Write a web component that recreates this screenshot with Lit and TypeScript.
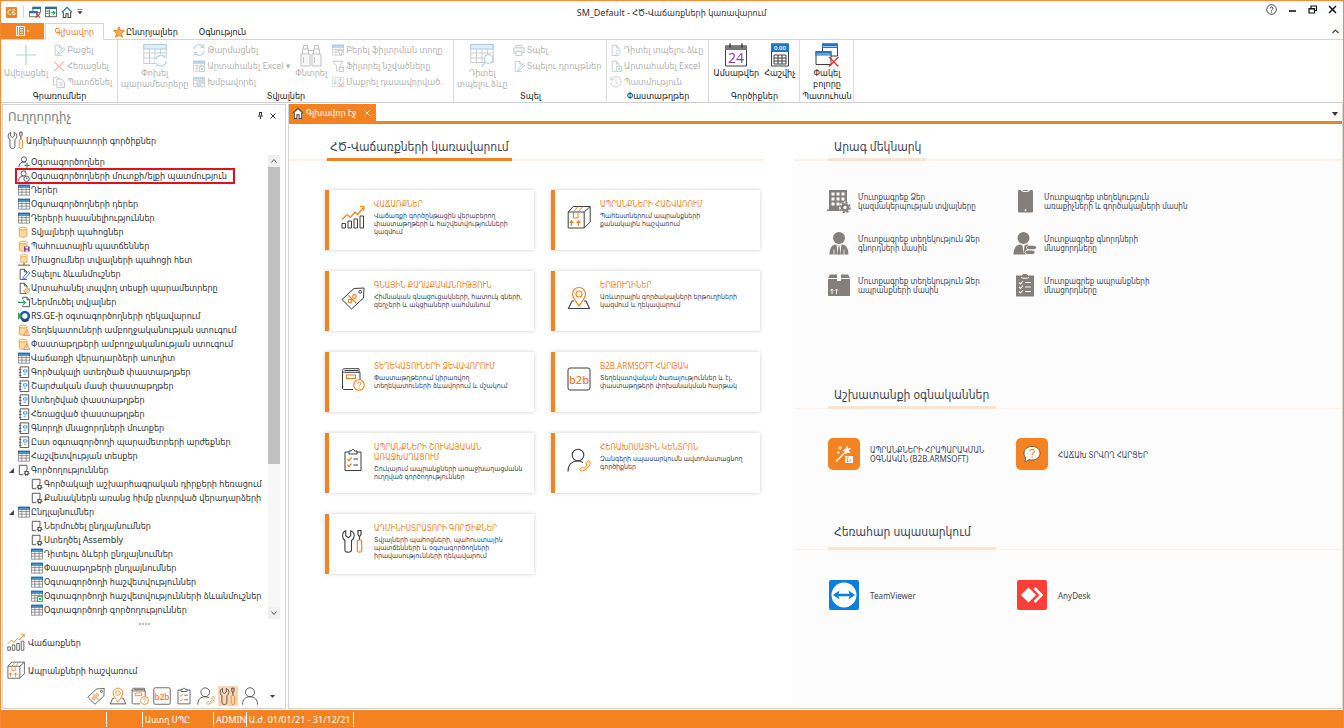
import { LitElement, html, css, svg, nothing } from "lit";
import { customElement } from "lit/decorators.js";
import { classMap } from "lit/directives/class-map.js";

const K = "#3f3f3f";
const O = "#f58220";
const B = "#1f6fb5";
const G = "#1fa055";

const gear = (x: number, y: number, r: number, c: string) => svg`
  <circle cx=${x} cy=${y} r=${r} fill="#fff" stroke=${c} stroke-width="1.3"/>
  <circle cx=${x} cy=${y} r=${r + 1} fill="none" stroke=${c} stroke-width="1" stroke-dasharray="1.2 1.4"/>`;
const page = (c = K) => svg`<path d="M10.5 13.5h-8v-12h5l3 3v3M7.5 1.5v3h3" fill="none" stroke=${c}/>`;
const grid = svg`<path d="M.5 1.5h13v11.5H.5zM.5 6.500h13M.5 9.500h13M4.500 4v9M9.500 4v9" fill="#fff" stroke="#777" stroke-width=".9"/><path d="M0 .8h14v3.800H0z" fill=${B}/><path d="M1 3.500h12" stroke="#8cc8f0" stroke-width=".9"/>`;
const db = svg`<path d="M1.5 3v8.5c0 2 9 2 9 0V3" fill="#fbd9a0" stroke="#ee9a34"/><ellipse cx="6" cy="3" rx="4.5" ry="1.7" fill="#fff0d8" stroke="#ee9a34"/>`;
const house = svg`<path d="M1 7.5 7 1.500l6 6" fill="none" stroke=${B} stroke-width="1.4"/><path d="M2.700 7v6.300h3V9h2.600v4.300h3V7" fill="none" stroke="#444" stroke-width="1.200"/>`;
const xls = svg`<path d="M7.500 7.500h6v6h-6z" fill="#e4f6ea" stroke=${G}/><path d="m9 9 3 3m0-3-3 3" stroke=${G}/>`;

/* 14 × 14 glyphs for the tree, the ribbon and the title bar */
const small: Record<string, unknown> = {
  grid,
  db,
  house,
  userAdd: svg`<circle cx="7" cy="4" r="3" fill="none" stroke=${K}/><path d="M1 13c0-4 2.500-6 6-6 1 0 1.500.2 2 .4" fill="none" stroke=${K}/><path d="M10.500 8v6M7.500 11h6" stroke=${G} stroke-width="1.300"/>`,
  userClock: svg`<circle cx="6.500" cy="4" r="3" fill="none" stroke=${K}/><path d="M.7 13c0-4 2.300-6 5.800-6" fill="none" stroke=${K}/><circle cx="10" cy="10.300" r="3.200" fill="#fff" stroke=${K}/><path d="M10 8.500v2h1.500" fill="none" stroke="#2b8fd8"/>`,
  dbSave: svg`${db}<path d="M7 7.500h6.500v6H7z" fill="#8e3a9d"/><path d="M8.700 8h3v2h-3zM9 11.500h2.500v2H9z" fill="#fff"/>`,
  dbNet: svg`<g transform="translate(2 -.5) scale(.82)">${db}</g><path d="M0 13h14M7 10.500V13" stroke=${K}/><path d="M5.500 12h3v2h-3z" fill=${O}/>`,
  dbWarn: svg`${db}<path d="m10.200 6.800 3.500 6.500H6.800z" fill="#fff" stroke="#ee7a34"/><path d="M10.200 9v2.300M10.200 12v.8" stroke="#ee7a34"/>`,
  pageEdit: svg`${page()}<path d="m5.500 13 1-3 5.500-6 2 1.800L8.500 12z" fill="#dcefff" stroke=${B} stroke-width=".9"/>`,
  pageOut: svg`${page()}<path d="M7 13.500 13 7.500M6.500 10l4-2 3 .3-.5 3-3 2z" fill="#fff" stroke=${O}/>`,
  pageIn: svg`<path d="M5.500 4v-2.500h5l3 3v8h-8V11M10.500 1.500v3h3" fill="none" stroke=${K}/><path d="M0 7.500h8M6 5l2.700 2.500L6 10" fill="none" stroke=${G} stroke-width="1.300"/>`,
  globe: svg`<circle cx="8" cy="7" r="4.600" fill="none" stroke="#1c5f9f" stroke-width="3"/><path d="M5 11.500c2 1.800 5 1.500 7-.5" fill="none" stroke="#1c3f7f" stroke-width="2.500"/><path d="M0 2.500 5 7l-5 4.500z" fill="#3aa14a"/>`,
  form: svg`<path d="M2.500 1h10v12.500h-10z" fill="#fff" stroke=${K}/><path d="M1 4h3M1 7.500h3M1 11h3" stroke=${K} stroke-width=".8"/><path d="M6.500 4.500h4v2.500h-4zM6.500 9.500h3" fill="none" stroke="#2b8fd8"/>`,
  pageGear: svg`<path d="M6 12.500H1.500v-11h9V7" fill="none" stroke=${K}/>${gear(10, 10.500, 2, K)}`,
  gridXls: svg`${grid}${xls}`,
  open: svg`${page("#666")}<path d="m5.500 12.500 1-3 5.500-5 2 1.800-5.500 5z" fill="#dcefff" stroke=${B}/>`,
  del: svg`<path d="m1 2 12 11M13 2 1 13" stroke="#e0302a" stroke-width="1.300"/>`,
  copy: svg`<path d="M3 10.500H.5v-9h4l3 2" fill="none" stroke="#555"/><path d="M4.500 3.500h5l4 3.500v6.500h-9z" fill="#fff" stroke="#555"/><path d="M6.500 8h5M6.500 10.500h5" stroke=${B}/>`,
  refresh: svg`<path d="M1 6a6 6 0 0 1 11-2.500V1M12.500 4H9M13 8a6 6 0 0 1-11 2.500V13M1.500 10H5" fill="none" stroke="#2b8fd8" stroke-width="1.300"/>`,
  group: svg`<path d="M.5 1.500h13v11H.5zM.5 5h13M.5 9h13M5 5v7.500" fill="#fff" stroke="#666"/><path d="M1 2h12v2H1zM6 6h7v2H6zM6 10h4v2H6z" fill="#2b8fd8"/>`,
  filterRow: svg`${grid}<path d="M6.500 7.500h7L11 10.500v3l-2-1v-2z" fill="#fff" stroke="#555"/>`,
  filterMark: svg`<path d="M7 12 5.500 13V7L1 1.500h12L9 6" fill="none" stroke="#555"/><path d="M8.500 8.500h5v5h-5zM9 8l3-2" fill="#fff" stroke="#555"/>`,
  clearSort: svg`<path d="M.5 1.500h13v11H.5zM7 2v10" fill="#fff" stroke="#999"/><path d="M3.500 3v6M2 7.500 3.500 9.500 5 7.500M10 7V3.500M8.500 5 10 3l1.500 2" fill="none" stroke=${B}/><path d="m8 8 5 5m0-5-5 5" stroke="#e0302a" stroke-width="1.300"/>`,
  print: svg`<path d="M3.500 4V1.500h7V4M1 4.500h12v6H1z" fill="#d8ebfb" stroke="#555"/><path d="M3.500 8.500h7v5h-7z" fill="#fff" stroke="#555"/>`,
  pageFind: svg`${page("#666")}<circle cx="9.500" cy="9.500" r="2.500" fill="#fff" stroke="#2b8fd8"/><path d="m7.500 11.500-2 2" stroke="#2b8fd8"/>`,
  pageXls: svg`${page("#666")}${xls}`,
  history: svg`<path d="M2 3.500a6 6 0 1 1-1 4M1 1v3.500h3.500" fill="none" stroke="#666"/><path d="M7 4v3.500l2.500 1.500" fill="none" stroke="#2b8fd8"/>`,
  windows: svg`<path d="M4.500 1.500h9v6h-9z" fill="#fff" stroke="#555"/><path d="M4 1h10v2.500H4z" fill=${B}/><path d="M.5 6.500h9v6h-9z" fill="#fff" stroke="#555"/><path d="M0 6h10v2.500H0z" fill=${B}/><path d="m8 8.500 5 5m0-5-5 5" stroke="#e0302a" stroke-width="1.300"/>`,
  panelGo: svg`<path d="M.5 1.500h13v11H.5zM5 4v8.500" fill="#fff" stroke="#444"/><path d="M0 1h14v2.500H0z" fill=${B}/><path d="M1.500 6H4M1.500 8.500H4" stroke="#444"/><path d="M6.500 8h5M9.500 6l2.200 2-2.200 2" fill="none" stroke=${G} stroke-width="1.200"/>`,
  star: svg`<path d="m7 .8 1.900 4.200 4.600.5-3.400 3.100.9 4.600L7 10.900l-4 2.300.9-4.600L.5 5.500l4.600-.5z" fill="#fba94a" stroke="#e07a1c" stroke-width=".9"/>`,
};

/* 24 × 24 glyphs */
const large: Record<string, unknown> = {
  sales: svg`<path d="M1 23v-4.500h3.500V23zM7 23v-7h3.500v7zM13 23v-9h3.500v9zM19 23V11h3.500v12z" fill="none" stroke=${K}/><path d="m1 14.500 5-5 3.500 3L14 7l2.500 2.500L23 2M19 1.500l4 .2-.3 4" fill="none" stroke=${O} stroke-width="1.200"/>`,
  box: svg`<path d="M1.200 7h16v16h-16zM1.200 7l5-5.500h17L17.200 7M23.200 1.500V17l-6 6" fill="none" stroke=${K}/><path d="M11 1.500 6.500 7v6h4.500V7l5-5.500" fill="none" stroke=${O}/><path d="M4.500 21v-5M2.700 18 4.500 15.800 6.300 18M11.500 21v-5M9.700 18l1.800-2.200 1.800 2.200" fill="none" stroke=${O} stroke-width="1.300"/>`,
  price: svg`<path d="M13 2.500 23 2l-.5 10-12 11-9.500-9.500z" fill="none" stroke=${K}/><circle cx="19.200" cy="5.800" r="1.400" fill="none" stroke=${K}/><path d="m7.500 9.500 8 8" stroke=${O} stroke-width="1.200"/><circle cx="9" cy="15" r="1.800" fill="none" stroke=${O} stroke-width="1.200"/><circle cx="13.500" cy="10.500" r="1.800" fill="none" stroke=${O} stroke-width="1.200"/>`,
  route: svg`<path d="M7 15H5L1.500 22.500h21L19 15h-2" fill="none" stroke=${K} stroke-width="1.100"/><path d="M12 20c-3-4.500-6.500-8-6.500-12a6.500 6.500 0 0 1 13 0c0 4-3.500 7.500-6.500 12z" fill="none" stroke=${O} stroke-width="1.200"/><circle cx="12" cy="8" r="3" fill="none" stroke=${O} stroke-width="1.100"/>`,
  book: svg`<path d="M12 22.500H3c-1 0-1.500-.8-1.500-1.500V3.500c0-1 .8-1.800 2-1.800H18v3.500M1.500 4c0 .8.800 1.300 1.800 1.300H19V13M3.500 3.500H17" fill="none" stroke=${K}/><path d="M5.500 8h9v3.500h-9z" fill="none" stroke=${O} stroke-width="1.100"/><circle cx="18" cy="18" r="5.300" fill="#fff" stroke=${O} stroke-width="1.100"/><path d="M16.300 16.800c0-2.400 3.600-2.200 3.400 0-.1 1.200-1.700 1.200-1.700 2.700M18 20.500v1" fill="none" stroke=${O}/>`,
  b2b: svg`<rect x="1" y="1" width="22" height="22" rx="2" fill="none" stroke=${K}/><text x="12" y="17" text-anchor="middle" font-family="Open Sans, sans-serif" font-weight="600" font-size="11" fill=${O}>b2b</text>`,
  clipboard: svg`<path d="M8 4H4v18.500h16V4h-4M8 3h2.500c0-2 3-2 3 0H16v3H8z" fill="none" stroke=${K}/><path d="M12.500 11H17M12.500 17H17" stroke=${K}/><path d="m6.500 11 1.500 1.500 2.500-3M6.500 17 8 18.500l2.500-3" fill="none" stroke=${O} stroke-width="1.200"/>`,
  call: svg`<circle cx="11" cy="7" r="5.800" fill="none" stroke=${K} stroke-width="1.100"/><path d="M1 23.500C1 17 4.500 13 11 13c2 0 3.500.5 5 1.500" fill="none" stroke=${K} stroke-width="1.100"/><path d="M21.500 12.500c1.500.5 2 2 1.200 4-1.200 3.300-4 5.800-7.200 6.300-1.500.2-2.500-.4-3-1.800l3-1.800 1.500 1c1.500-.7 2.500-1.800 3-3.200l-1-1.500z" fill="none" stroke=${O}/>`,
  tools: svg`<path d="M2.500 1.800v5l2.500 2 2.500-2v-5c2 .8 3.500 2.700 3.500 5 0 2-1 3.600-2.700 4.700V21c0 3-6.600 3-6.600 0v-9.500C0 10.400-.6 8.800-.6 6.800c0-2.300 1-4.200 3.100-5z" transform="translate(2.200 0)" fill="none" stroke=${K} stroke-width="1.100"/><path d="M17 1.500h3v4l-1 1.500h-1l-1-1.500zM18.500 7v4" fill="none" stroke=${K} stroke-width="1.200"/><path d="M16.300 12.500c0-2 4.400-2 4.400 0V22c0 1.500-4.400 1.500-4.400 0z" fill="none" stroke=${O} stroke-width="1.200"/>`,
  person: svg`<circle cx="12" cy="7" r="6" fill="none" stroke=${K} stroke-width="1.100"/><path d="M2 23.500C2 17 5.500 13 12 13s10 4 10 10.500" fill="none" stroke=${K} stroke-width="1.100"/>`,
  plus: svg`<path d="M12 2v20M2 12h20" stroke=${G} stroke-width="1.200"/>`,
  params: svg`<path d="M.8 1.500h22.400v19H.8zM.8 10h22.400M.8 15h22.400M6.500 6v14.500M12 6v14.500M17.500 6v14.500" fill="#fff" stroke="#777"/><path d="M.8 1.500h22.400V6H.8z" fill="#a8d3f2" stroke=${B}/><circle cx="18" cy="17.500" r="6" fill="#fff"/><path d="M13 16.500a5 5 0 0 1 9-2v-2M23 18.500a5 5 0 0 1-9 2.500v2.500" fill="none" stroke="#2b8fd8" stroke-width="1.200"/>`,
  find: svg`<path d="M2 11h9v12H2zM13 11h9v12h-9zM3.500 11V6h6v5M14.500 11V6h6v5M4.500 6V2.500h4V6M15.500 6V2.500h4V6M9.500 7.500h5" fill="#eee" stroke="#555"/><path d="M4.500 14v6M15.500 14v6" stroke="#555"/>`,
  preview: svg`<path d="M.8 1.500h22.400v18H.8zM.8 10h22.400M.8 15h22.400M6.500 6v13.500M12 6v13.500M17.500 6v13.500" fill="#fff" stroke="#777"/><path d="M.8 1.500h22.400V6H.8z" fill="#a8d3f2" stroke=${B}/><circle cx="18.500" cy="16" r="4.300" fill="#fff" stroke="#2b8fd8" stroke-width="1.200"/><path d="m15.500 19.500-4 4" stroke="#2b8fd8" stroke-width="1.300"/>`,
  calendar: svg`<path d="M1.500 3h21v20h-21z" fill="#fff" stroke=${K}/><path d="M1 2.500h22V7H1z" fill="#777"/><path d="M6 .5v4M18 .5v4" stroke=${K} stroke-width="1.500"/><text x="12" y="20" text-anchor="middle" font-family="Open Sans, sans-serif" font-size="14" fill="#8e3a9d">24</text>`,
  calc: svg`<path d="M3.500 1h17v22h-17z" fill="#fff" stroke=${K}/><path d="M3 .5h18V9H3z" fill="#2377bd"/><text x="12" y="7" text-anchor="middle" font-family="Open Sans, sans-serif" font-weight="600" font-size="6" fill="#fff">0.00</text><path d="M6 12h12v9H6zM6 15h12M6 18h12M10 12v9M14 12v9" fill="none" stroke=${K}/>`,
  closeAll: svg`<path d="M7.500 1h15v12h-15z" fill="#fff" stroke=${K}/><path d="M7 .5h16V5H7z" fill="#2377bd"/><path d="M8 3.500h14" stroke="#9fd0f3"/><path d="M1 8.500h15v13H1z" fill="#fff" stroke=${K}/><path d="M.5 8h16v4.500H.5z" fill="#2377bd"/><path d="M1.500 11h14" stroke="#9fd0f3"/><path d="m14 14 9.500 9.500m0-9.500L14 23.500" stroke="#e0302a" stroke-width="1.200"/>`,
};

/* 24 × 24 solid grey glyphs of the quick start list */
const D = "#857f7c";
const solid: Record<string, unknown> = {
  company: svg`<path d="M2 1h18v13h-5v8H0v-1.500h2z" fill=${D}/><path d="M4.500 3.500h3v3h-3zM9.500 3.500h3v3h-3zM14.500 3.500h3v3h-3zM4.500 8.500h3v3h-3zM9.500 8.500h3v3h-3zM14.500 8.500h3v3h-3zM4.500 13.500h3v3h-3zM9.500 13.500h3v3h-3z" fill="#fff"/><circle cx="18" cy="18.500" r="6" fill="#fcfcfc"/><circle cx="18" cy="18.500" r="3" fill="none" stroke=${D} stroke-width="2.600"/><circle cx="18" cy="18.500" r="5" fill="none" stroke=${D} stroke-width="1.600" stroke-dasharray="2.200 1.700"/>`,
  client: svg`<circle cx="12" cy="7" r="6" fill=${D}/><path d="M2.500 23.500c0-6 2.500-10 6.500-10l3 1.500 3-1.500c4 0 6.500 4 6.500 10z" fill=${D}/><path d="M7 18.500v5M17 18.500v5" stroke="#fcfcfc" stroke-width=".8"/><path d="m9.500 13.500 2.500 2 2.500-2-1.200 10h-2.600z" fill="#fcfcfc"/><path d="m11.300 15.500h1.400l.6 8h-2.600z" fill=${D}/>`,
  goods: svg`<path d="m3 1.500h7V8h4V1.500h7L23 5v18H1V5z" fill=${D}/><path d="M1 5.500h9M14 5.500h9M5 21v-5M3.500 17.500 5 16l1.500 1.500M9.500 21v-5M8 17.500 9.500 16l1.500 1.500" fill="none" stroke="#fcfcfc"/>`,
  phone: svg`<rect x="5" y="1" width="15" height="22.500" rx="1" fill=${D}/><path d="M8.500 1c.3 2 7.700 2 8 0" fill="none" stroke="#fcfcfc" stroke-width="1.200"/><circle cx="12.500" cy="21.300" r="1" fill="#fcfcfc"/>`,
  balance: svg`<circle cx="10.500" cy="7" r="6" fill=${D}/><path d="M.5 23.500c0-6 3-10 7-10l3 1.500 3-1.500c2 0 3.500.6 4.500 2l-5 4v4z" fill=${D}/><path d="m9.500 14 1 9 1-9z" fill="#fcfcfc"/><ellipse cx="18.500" cy="16.500" rx="5" ry="2.300" fill=${D} stroke="#fcfcfc" stroke-width=".8"/><ellipse cx="17" cy="21.300" rx="5" ry="2.300" fill=${D} stroke="#fcfcfc" stroke-width=".8"/>`,
  stock: svg`<path d="M3 2.500h6c0-2 6-2 6 0h6v21H3z" fill=${D}/><path d="M8 4.500c1 1 7 1 8 0" stroke="#fcfcfc" fill="none"/><path d="M12 9.500h6M12 14h6M12 18.500h6M6 9.500 7.500 11 10 8M6 14l1.500 1.500 2.500-3M6 18.500 7.500 20l2.500-3" fill="none" stroke="#fcfcfc" stroke-width="1.100"/>`,
};

/* 32 × 32 tiles */
const tile: Record<string, unknown> = {
  wizard: svg`<rect width="32" height="32" rx="5" fill=${O}/><path d="m8 23.500 9-9" stroke="#fff" stroke-width="1.200"/><path d="m19 7.500 1 2.800 3-.2-2 2.400 1.500 2.700-3-.8-2 2.200-.3-2.900-2.800-1.200 2.700-1.300z" fill="#fff"/><path d="M12 8v4M10 10h4M9 14.500h2.500M10.200 13.300v2.500" stroke="#fff" stroke-width=".9"/><path d="M17 18h8v7h-8z" fill="#fff"/><path d="M17 20h3v-2M19.500 24v-3M22 24v-3" fill="none" stroke=${O} stroke-width=".8"/>`,
  faq: svg`<rect width="32" height="32" rx="5" fill=${O}/><path d="M16 8.500c5 0 8 3 8 6.700s-3 6.800-8 6.800c-1 0-2-.1-3-.4-1.500 1.400-2.800 1.700-4.500 1.700 1-1 1.300-2 1.300-3.300-1.200-1.300-1.800-2.900-1.800-4.800 0-3.700 3-6.700 8-6.700z" fill="#fff" stroke="#555" stroke-width=".9"/><path d="M14 13.500c0-3 4.500-2.700 4.300 0-.2 1.700-2.200 1.600-2.200 3.800M16.100 18.500v1.200" fill="none" stroke=${O} stroke-width="1.100"/>`,
  team: svg`<rect x="1" y="1" width="30" height="30" rx="2" fill="#0b7fe0"/><circle cx="16" cy="16" r="12.500" fill="#fff"/><path d="m5 16 6.500-4.500-1 3.300h11l-1-3.300L27 16l-6.500 4.500 1-3.300h-11l1 3.300z" fill="#0b7fe0"/>`,
  any: svg`<rect x="1" y="1" width="30" height="30" rx="2" fill="#fb3f36"/><path d="m5 16 7.500-7.500L20 16l-7.500 7.500z" fill="#fff"/><path d="m18.500 9 7 7-7 7" fill="none" stroke="#fff" stroke-width="2.600"/>`,
};

const icon = (set: Record<string, unknown>, name: string, box: number, cls: string) =>
  html`<svg class=${cls} viewBox="0 0 ${box} ${box}" aria-hidden="true">${set[name]}</svg>`;

type Node = { icon: string; text: string; level?: number; open?: boolean; marked?: boolean };
const tree: Node[] = [
  { icon: "userAdd", text: "Օգտագործողներ" },
  { icon: "userClock", text: "Օգտագործողների մուտքի/ելքի պատմություն", marked: true },
  { icon: "grid", text: "Դերեր" },
  { icon: "grid", text: "Օգտագործողների դերեր" },
  { icon: "grid", text: "Դերերի հասանելիություններ" },
  { icon: "db", text: "Տվյալների պահոցներ" },
  { icon: "dbSave", text: "Պահուստային պատճեններ" },
  { icon: "dbNet", text: "Միացումներ տվյալների պահոցի հետ" },
  { icon: "pageEdit", text: "Տպելու ձևանմուշներ" },
  { icon: "pageOut", text: "Արտահանել տպվող տեսքի պարամետրերը" },
  { icon: "pageIn", text: "Ներմուծել տվյալներ" },
  { icon: "globe", text: "RS.GE-ի օգտագործողների ղեկավարում" },
  { icon: "dbWarn", text: "Տեղեկատուների ամբողջականության ստուգում" },
  { icon: "dbWarn", text: "Փաստաթղթերի ամբողջականության ստուգում" },
  { icon: "grid", text: "Վաճառքի վերադարձերի աուդիտ" },
  { icon: "form", text: "Գործակալի ստեղծած փաստաթղթեր" },
  { icon: "form", text: "Շարժական մասի փաստաթղթեր" },
  { icon: "form", text: "Ստեղծված փաստաթղթեր" },
  { icon: "form", text: "Հեռացված փաստաթղթեր" },
  { icon: "form", text: "Գնորդի մնացորդների մուտքեր" },
  { icon: "form", text: "Ըստ օգտագործողի պարամետրերի արժեքներ" },
  { icon: "grid", text: "Հաշվետվության տեսքեր" },
  { icon: "pageGear", text: "Գործողություններ", open: true },
  { icon: "pageGear", text: "Գործակալի աշխարհագրական դիրքերի հեռացում", level: 1 },
  { icon: "pageGear", text: "Քանակներն առանց հիմք ընտրված վերադարձերի", level: 1 },
  { icon: "grid", text: "Ընդլայնումներ", open: true },
  { icon: "pageGear", text: "Ներմուծել ընդլայնումներ", level: 1 },
  { icon: "pageGear", text: "Ստեղծել Assembly", level: 1 },
  { icon: "grid", text: "Դիտելու ձևերի ընդլայնումներ", level: 1 },
  { icon: "grid", text: "Փաստաթղթերի ընդլայնումներ", level: 1 },
  { icon: "grid", text: "Օգտագործողի հաշվետվություններ", level: 1 },
  { icon: "gridXls", text: "Օգտագործողի հաշվետվությունների ձևանմուշներ", level: 1 },
  { icon: "grid", text: "Օգտագործողի գործողություններ", level: 1 },
];

const cards = [
  { icon: "sales", title: "ՎԱՃԱՌՔՆԵՐ", lines: ["Վաճառքի գործընթացին վերաբերող", "փաստաթղթերի և հաշվետվությունների", "կազմում"] },
  { icon: "box", title: "ԱՊՐԱՆՔՆԵՐԻ ՀԱՇՎԱՌՈՒՄ", lines: ["Պահեստներում ապրանքների", "քանակային հաշվառում"] },
  { icon: "price", title: "ԳՆԱՅԻՆ ՔԱՂԱՔԱԿԱՆՈՒԹՅՈՒՆ", lines: ["Հիմնական գնացուցակների, հատուկ գների,", "զեղչերի և ակցիաների սահմանում"] },
  { icon: "route", title: "ԵՐԹՈՒՂԻՆԵՐ", lines: ["Առևտրային գործակալների երթուղիների", "կազմում և ղեկավարում"] },
  { icon: "book", title: "ՏԵՂԵԿԱՏՈՒՆԵՐԻ ՁԵՎԱՎՈՐՈՒՄ", lines: ["Փաստաթղթերում կիրառվող", "տեղեկատուների ձևավորում և մշակում"] },
  { icon: "b2b", title: "B2B.ARMSOFT ՀԱՐԹԱԿ", lines: ["Տեղեկատվական ծառայություններ և էլ.", "փաստաթղթերի փոխանակման հարթակ"] },
  { icon: "clipboard", title: "ԱՊՐԱՆՔՆԵՐԻ ՇՈՒԿԱՅԱԿԱՆ ԱՌԱՋԽԱՂԱՑՈՒՄ", lines: ["Շուկայում ապրանքների առաջխաղացմանն", "ուղղված գործողություններ"] },
  { icon: "call", title: "ՀԵՌԱԽՈՍԱՅԻՆ ԿԵՆՏՐՈՆ", lines: ["Զանգերի սպասարկումն ավտոմատացնող", "գործիքներ"] },
  { icon: "tools", title: "ԱԴՄԻՆԻՍՏՐԱՏՈՐԻ ԳՈՐԾԻՔՆԵՐ", lines: ["Տվյալների պահոցների, պահուստային", "պատճենների և օգտագործողների", "իրավասությունների ղեկավարում"] },
];

const quick = [
  { icon: "company", lines: ["Մուտքագրեք Ձեր", "կազմակերպության տվյալները"] },
  { icon: "phone", lines: ["Մուտքագրեք տեղեկություն", "առաքիչների և գործակալների մասին"] },
  { icon: "client", lines: ["Մուտքագրեք տեղեկություն Ձեր", "գնորդների մասին"] },
  { icon: "balance", lines: ["Մուտքագրեք գնորդների", "մնացորդները"] },
  { icon: "goods", lines: ["Մուտքագրեք տեղեկություն Ձեր", "ապրանքների մասին"] },
  { icon: "stock", lines: ["Մուտքագրեք ապրանքների", "մնացորդները"] },
];

const modules: [string, string][] = [
  ["price", "Գնային քաղաքականություն"],
  ["route", "Երթուղիներ"],
  ["book", "Տեղեկատուների ձևավորում"],
  ["b2b", "B2B.ArmSoft հարթակ"],
  ["clipboard", "Ապրանքների շուկայական առաջխաղացում"],
  ["call", "Հեռախոսային կենտրոն"],
  ["tools", "Ադմինիստրատորի գործիքներ"],
  ["person", "Օգտագործող"],
];

const base = css`
  * { box-sizing: border-box; }
  button, a {
    font: inherit; color: inherit; background: none; border: 0; padding: 0; margin: 0;
    text-align: left; text-decoration: none; white-space: nowrap; cursor: pointer;
  }
  svg { display: block; flex: none; }
  h1, h2, h3, p, ul { margin: 0; padding: 0; font-weight: 400; font-size: inherit; }
  ul { list-style: none; }
  .i12 { width: 12px; height: 12px; }
  .i18 { width: 18px; height: 18px; }
  .i24 { width: 24px; height: 24px; }
  .i32 { width: 32px; height: 32px; }
`;

@customElement("app-ribbon")
class AppRibbon extends LitElement {
  static styles = [base, css`
    :host { display: block; }
    .bar { display: flex; align-items: center; height: 22px; padding: 0 6px 0 5px; }
    .logo { width: 11px; height: 11px; }
    .quick { display: flex; align-items: center; gap: 4px; margin-left: 6px; padding-left: 5px; border-left: 1px solid #d5d5d5; }
    .side { flex: 1; display: flex; align-items: center; }
    .right { justify-content: flex-end; gap: 11px; align-self: flex-start; height: 16px; }
    .bar .name { color: #333; font-size: 9px; }
    .tabs { display: flex; height: 17px; align-items: stretch; border-bottom: 1px solid #d5d5d5; font-size: 9px; }
    .tab { display: flex; align-items: center; gap: 1px; padding: 0 9px; margin-bottom: -1px; color: #222; }
    .tab.on { justify-content: center; width: 59px; padding: 0; color: #f57c1a; border: 1px solid #d5d5d5; border-bottom-color: #fff; background: #fff; margin-left: 1px; }
    .tab.help { padding-left: 12px; }
    .file { width: 43px; display: flex; align-items: center; justify-content: center; background: #f58220; color: #fff; }
    .fill { flex: 1; }
    .fold { padding-right: 4px; display: flex; align-items: center; }
    .groups { display: flex; height: 63px; border-bottom: 1px solid #d0d0d0; font-size: 9px; color: #222; }
    .group { display: flex; flex-direction: column; border-right: 1px solid #dcdcdc; padding: 2px 2px 0 3px; }
    .g1 { width: 117px; } .g2 { width: 336px; } .g3 { width: 153px; }
    .g4 { width: 102px; } .g5 { width: 91px; } .g6 { width: 54px; }
    .items { display: flex; gap: 5px; flex: 1; }
    .g5 .items, .g6 .items { justify-content: center; }
    .caption { text-align: center; line-height: 13px; white-space: nowrap; }
    .g6 .caption { margin: 0 -2px; }
    .big { display: flex; flex-direction: column; align-items: center; align-self: flex-start; line-height: 11px; text-align: center; padding-top: 1px; }
    .big span { display: block; height: 11px; }
    .col { display: flex; flex-direction: column; gap: 4px; padding-top: 2px; }
    .line { display: flex; align-items: center; gap: 2px; height: 12px; line-height: 12px; }
    .off { opacity: .36; }
  `];

  big(ic: string, lines: string[], off = true) {
    return html`<button class=${classMap({ big: true, off })} ?disabled=${off}>
      ${icon(large, ic, 24, "i24")}${lines.map((l) => html`<span>${l}</span>`)}
    </button>`;
  }
  col(items: [string, string][]) {
    return html`<div class="col">${items.map(([ic, t]) => html`
      <button class="line off" disabled>${icon(small, ic, 14, "i12")}${t}</button>`)}</div>`;
  }

  render() {
    return html`
      <header class="bar">
        <div class="side">
          <svg class="logo" viewBox="0 0 11 11" aria-hidden="true"><rect width="11" height="11" rx="1" fill="#f58220"/><path d="M5 3H3.500c-2 0-2 4.500 0 4.500H5M6 3c0-1 3-1 3 0S6 4.500 6 6s3 2.500 3 1-1.500-2-3-3" fill="none" stroke="#fff"/></svg>
          <div class="quick">
            <button aria-label="Փակել բոլորը">${icon(small, "windows", 14, "i12")}</button>
            <button aria-label="Ուղղորդիչ">${icon(small, "panelGo", 14, "i12")}</button>
            <button aria-label="Գլխավոր էջ">${icon(small, "house", 14, "i12")}</button>
            <svg width="6" height="6" viewBox="0 0 6 6"><path d="M.5.500h5M1 2.500h4l-2 2.500z" fill="#444" stroke="#444" stroke-width=".6"/></svg>
          </div>
        </div>
        <h1 class="name">SM_Default - ՀԾ-Վաճառքների կառավարում</h1>
        <div class="side right">
          <svg width="11" height="11" viewBox="0 0 11 11"><circle cx="5.500" cy="5.500" r="4.800" fill="none" stroke="#333" stroke-width=".9"/><path d="M4 4.400c0-2 3-1.800 3 0 0 1-1.500 1-1.500 2.200M5.500 7.600v1" fill="none" stroke="#333"/></svg>
          <svg width="9" height="9" viewBox="0 0 9 9"><path d="M1 6h7" stroke="#111" stroke-width="1.600"/></svg>
          <svg width="9" height="9" viewBox="0 0 9 9"><path d="M3 3V1h5.500v4.500H7M1 3.500h5.500V8H1zM1 4h5.500" fill="none" stroke="#111" stroke-width="1.200"/></svg>
          <svg width="9" height="9" viewBox="0 0 9 9"><path d="m1 1 7 7m0-7L1 8" stroke="#111" stroke-width="1.500"/></svg>
        </div>
      </header>
      <nav class="tabs">
        <button class="file" aria-label="Ֆայլ"><svg width="14" height="10" viewBox="0 0 14 10"><path d="M.5.500h8v9h-8zM2.500.500v9M4 2.500h3M4 5h3M4 7.500h3" fill="none" stroke="#fff"/><path d="M10.500 4.500h3L12 6.500z" fill="#fff"/></svg></button>
        <button class="tab on">Գլխավոր</button>
        <button class="tab">${icon(small, "star", 14, "i12")}Ընտրյալներ</button>
        <button class="tab help">Օգնություն</button>
        <span class="fill"></span>
        <button class="fold" aria-label="Ծալել"><svg width="7" height="5" viewBox="0 0 7 5"><path d="m.5 4 3-3 3 3" fill="none" stroke="#444" stroke-width="1.200"/></svg></button>
      </nav>
      <div class="groups">
        <section class="group g1">
          <div class="items">
            ${this.big("plus", ["Ավելացնել"])}
            ${this.col([["open", "Բացել"], ["del", "Հեռացնել"], ["copy", "Պատճենել"]])}
          </div>
          <div class="caption">Գրառումներ</div>
        </section>
        <section class="group g2">
          <div class="items">
            ${this.big("params", ["Փոխել", "պարամետրերը"])}
            ${this.col([["refresh", "Թարմացնել"], ["gridXls", "Արտահանել Excel ▾"], ["group", "Խմբավորել"]])}
            ${this.big("find", ["Փնտրել"])}
            ${this.col([["filterRow", "Բերել ֆիլտրման տողը"], ["filterMark", "Ֆիլտրել նշվածները"], ["clearSort", "Մաքրել դասավորված."]])}
          </div>
          <div class="caption">Տվյալներ</div>
        </section>
        <section class="group g3">
          <div class="items">
            ${this.big("preview", ["Դիտել", "տպելու ձևը"])}
            ${this.col([["print", "Տպել"], ["open", "Տպելու դրույթներ"]])}
          </div>
          <div class="caption">Տպել</div>
        </section>
        <section class="group g4">
          <div class="items">
            ${this.col([["pageFind", "Դիտել տպելու ձևը"], ["pageXls", "Արտահանել Excel"], ["history", "Պատմություն"]])}
          </div>
          <div class="caption">Փաստաթղթեր</div>
        </section>
        <section class="group g5">
          <div class="items">${this.big("calendar", ["Ամսաթվեր"], false)}${this.big("calc", ["Հաշվիչ"], false)}</div>
          <div class="caption">Գործիքներ</div>
        </section>
        <section class="group g6">
          <div class="items">${this.big("closeAll", ["Փակել", "բոլորը"], false)}</div>
          <div class="caption">Պատուհան</div>
        </section>
      </div>`;
  }
}

@customElement("app-navigator")
class AppNavigator extends LitElement {
  static styles = [base, css`
    :host { display: flex; flex-direction: column; border: 1px solid #d5d5d5; background: #fff; font-size: 9px; color: #333; min-height: 0; }
    .head { display: flex; align-items: center; height: 23px; padding: 0 9px 2px 5px; gap: 7px; }
    .head h2 { flex: 1; font-size: 13px; color: #808080; }
    .section { display: flex; align-items: center; gap: 1px; height: 24px; padding-left: 4px; }
    .body { display: flex; flex: 1; min-height: 0; margin: 3px 5px 0 0; }
    .tree { flex: 1; min-width: 0; overflow: hidden; padding-left: 3px; }
    .row { position: relative; display: flex; align-items: center; width: fit-content; height: 14px; gap: 1px; line-height: 14px; }
    .row.child { padding-left: 13px; }
    .arrow { width: 11px; display: flex; justify-content: center; }
    .marked::after { content: ""; position: absolute; inset: -1px -8px -1px 9px; border: 2px solid #e2101c; }
    .scroll { width: 12px; display: flex; flex-direction: column; background: #f7f7f7; }
    .step { height: 12px; display: flex; align-items: center; justify-content: center; background: #f0f0f0; }
    .thumb { flex: 297; background: #c0c0c0; }
    .rest { flex: 143; }
    .grip { height: 9px; display: flex; align-items: center; justify-content: center; }
    .module { display: flex; align-items: center; gap: 3px; height: 28px; padding-left: 4px; }
    .strip { display: flex; align-items: center; justify-content: flex-end; gap: 2px; height: 24px; padding-right: 3px; }
    .cell { width: 20px; height: 20px; display: flex; align-items: center; justify-content: center; }
    .cell.on { background: #fcd5b4; }
    .drop { width: 20px; display: flex; justify-content: center; }
  `];

  render() {
    return html`
      <div class="head">
        <h2>Ուղղորդիչ</h2>
        <svg width="5" height="7" viewBox="0 0 5 7"><path d="M1 .5h3M1.500.500v3M3.500.500v3M0 4h5M2.500 4v3" fill="none" stroke="#333" stroke-width="1"/></svg>
        <svg width="6" height="6" viewBox="0 0 6 6"><path d="m.5.500 5 5m0-5-5 5" stroke="#333"/></svg>
      </div>
      <div class="section">${icon(large, "tools", 24, "i18")}<h3>Ադմինիստրատորի գործիքներ</h3></div>
      <div class="body">
        <ul class="tree">
          ${tree.map((n) => html`<li>
            <button class=${classMap({ row: true, child: !!n.level, marked: !!n.marked })}>
              <span class="arrow">${n.open ? html`<svg width="5" height="5" viewBox="0 0 5 5"><path d="M5 0v5H0z" fill="#444"/></svg>` : nothing}</span>
              ${icon(small, n.icon, 14, "i12")}${n.text}
            </button></li>`)}
        </ul>
        <div class="scroll">
          <span class="step"><svg width="6" height="4" viewBox="0 0 6 4"><path d="m.5 3.500 2.500-3 2.500 3" fill="none" stroke="#555"/></svg></span>
          <span class="thumb"></span><span class="rest"></span>
          <span class="step"><svg width="6" height="4" viewBox="0 0 6 4"><path d="m.5.500 2.500 3 2.500-3" fill="none" stroke="#555"/></svg></span>
        </div>
      </div>
      <div class="grip"><svg width="11" height="2" viewBox="0 0 11 2"><path d="M0 1h11" stroke="#bbb" stroke-width="2" stroke-dasharray="2 1"/></svg></div>
      <button class="module">${icon(large, "sales", 24, "i18")}Վաճառքներ</button>
      <button class="module">${icon(large, "box", 24, "i18")}Ապրանքների հաշվառում</button>
      <div class="strip">
        ${modules.map(([n, label]) => html`
          <button class=${classMap({ cell: true, on: n === "tools" })} aria-label=${label}>${icon(large, n, 24, "i18")}</button>`)}
        <span class="drop"><svg width="5" height="3" viewBox="0 0 5 3"><path d="M0 0h5L2.500 3z" fill="#444"/></svg></span>
      </div>`;
  }
}

@customElement("app-home")
class AppHome extends LitElement {
  static styles = [base, css`
    :host { display: flex; flex-direction: column; border: 1px solid #d5d5d5; border-top: 0; min-width: 0; color: #3d4656; background: #fff; }
    .strip { display: flex; align-items: flex-end; justify-content: space-between; height: 20px; border-bottom: 3px solid #f58220; }
    .tab { display: flex; align-items: center; gap: 2px; height: 17px; padding: 0 6px 0 3px; background: #f58220; color: #fff; font-size: 9px; }
    .tab .x { margin-left: 5px; }
    .drop { padding: 0 4px; height: 14px; width: 14px; }
    .cols { display: grid; grid-template-columns: 503px 1fr; flex: 1; min-height: 0; }
    .right { display: flex; flex-direction: column; }
    .head { display: flex; height: 37px; border-bottom: 2px solid #fff1e6; }
    .left .head { margin-right: 28px; padding-left: 38px; }
    .right .head { padding-left: 34px; margin-left: 2px; }
    .head h2 { display: flex; align-items: center; font-size: 12px; padding: 10px 3px 0; border-bottom: 3px solid #f58220; white-space: nowrap; height: 37px; min-width: 98px; }
    .right .head h2 { border-bottom-color: #fde2cc; padding-left: 6px; }
    .wide h2 { min-width: 168px; }
    .right .head.tall h2 { padding-top: 6px; padding-bottom: 4px; }
    .pane { background: #fcfcfc; flex: 1; }
    .pane .head { border-bottom-width: 1px; }
    .cards { display: grid; grid-template-columns: 209px 209px; gap: 21px 17px; padding: 29px 0 0 36px; }
    .card { display: grid; grid-template-columns: 24px 1fr; gap: 9px; height: 60px; padding: 9px 0 0 12px; border-left: 4px solid #f58220; background: #fff; box-shadow: 0 0 4px rgba(0,0,0,.2); }
    .card .i24 { margin-top: 6px; }
    .card h3 { color: #f58220; font-size: 8px; line-height: 10px; white-space: normal; margin-bottom: 3px; }
    .card p { font-size: 7px; line-height: 8px; }
    .quick { display: grid; grid-template-columns: 186px 1fr; row-gap: 18px; padding: 28px 0 0 35px; height: 211px; align-content: start; }
    .quick a { display: flex; align-items: center; gap: 7px; font-size: 8px; line-height: 9px; height: 24px; }
    .tiles { display: grid; grid-template-columns: 188px 1fr; padding: 29px 0 0 36px; height: 104px; align-content: start; }
    .tiles a { display: flex; align-items: center; gap: 10px; font-size: 8px; line-height: 9px; }
    .l { display: block; }
  `];

  render() {
    const link = (set: Record<string, unknown>, ic: string, lines: string[], box: number, cls: string) => html`
      <a href="#">${icon(set, ic, box, cls)}<span>${lines.map((l) => html`<span class="l">${l}</span>`)}</span></a>`;
    return html`
      <div class="strip">
        <button class="tab">
          <svg class="i12" viewBox="0 0 14 14"><path d="M2 7h10v6.500H2z" fill="#fff"/><path d="m1 7.500 6-6 6 6" fill="#fff" stroke="#444" stroke-width="1.300"/><path d="M2.700 7v6.300h3V9h2.600v4.300h3V7" fill="none" stroke="#444" stroke-width="1.200"/></svg>
          Գլխավոր էջ
          <svg class="x" width="6" height="6" viewBox="0 0 6 6"><path d="m.5.500 5 5m0-5-5 5" stroke="#fff"/></svg>
        </button>
        <svg class="drop" viewBox="0 0 6 4"><path d="M0 0h6L3 4z" fill="#333"/></svg>
      </div>
      <div class="cols">
        <section class="left">
          <div class="head"><h2>ՀԾ-Վաճառքների կառավարում</h2></div>
          <div class="cards">
            ${cards.map((c) => html`<a class="card" href="#">${icon(large, c.icon, 24, "i24")}
              <div><h3>${c.title}</h3><p>${c.lines.map((l) => html`<span class="l">${l}</span>`)}</p></div></a>`)}
          </div>
        </section>
        <section class="right">
          <div class="head"><h2>Արագ մեկնարկ</h2></div>
          <div class="pane">
            <div class="quick">${quick.map((q) => link(solid, q.icon, q.lines, 24, "i24"))}</div>
            <div class="head wide"><h2>Աշխատանքի օգնականներ</h2></div>
            <div class="tiles">
              ${link(tile, "wizard", ["ԱՊՐԱՆՔՆԵՐԻ ՀՐԱՊԱՐԱԿՄԱՆ", "ՕԳՆԱԿԱՆ (B2B.ARMSOFT)"], 32, "i32")}
              ${link(tile, "faq", ["ՀԱՃԱԽ ՏՐՎՈՂ ՀԱՐՑԵՐ"], 32, "i32")}
            </div>
            <div class="head wide tall"><h2>Հեռահար սպասարկում</h2></div>
            <div class="tiles">
              ${link(tile, "team", ["TeamViewer"], 32, "i32")}
              ${link(tile, "any", ["AnyDesk"], 32, "i32")}
            </div>
          </div>
        </section>
      </div>`;
  }
}

@customElement("app-root")
class AppRoot extends LitElement {
  static styles = [base, css`
    :host {
      display: flex; flex-direction: column; height: 100vh; overflow: hidden; background: #fff;
      border: 1px solid #f58b35; border-bottom: 0;
      font-family: "Noto Sans", "DejaVu Sans Condensed", "DejaVu Sans", sans-serif;
    }
    .main { flex: 1; min-height: 0; display: grid; grid-template-columns: 284px 1fr; gap: 2px; padding: 1px 0 1px 1px; }
    .status { display: flex; align-items: center; height: 19px; background: #f58220; color: #fff; font-size: 9px; margin: 0 -1px; }
    .status span { height: 15px; line-height: 15px; border-right: 1px solid #fff; padding-left: 2px; white-space: nowrap; }
    .s1 { width: 107px; } .s2 { width: 36px; } .s3 { width: 71px; } .s4 { width: 33px; } .s5 { width: 107px; }
  `];
  render() {
    return html`
      <app-ribbon></app-ribbon>
      <main class="main"><app-navigator></app-navigator><app-home></app-home></main>
      <footer class="status">
        <span class="s1"></span><span class="s2"></span><span class="s3">Աստղ ՍՊԸ</span><span class="s4">ADMIN</span><span class="s5">Ա.ժ. 01/01/21 - 31/12/21</span>
      </footer>`;
  }
}
